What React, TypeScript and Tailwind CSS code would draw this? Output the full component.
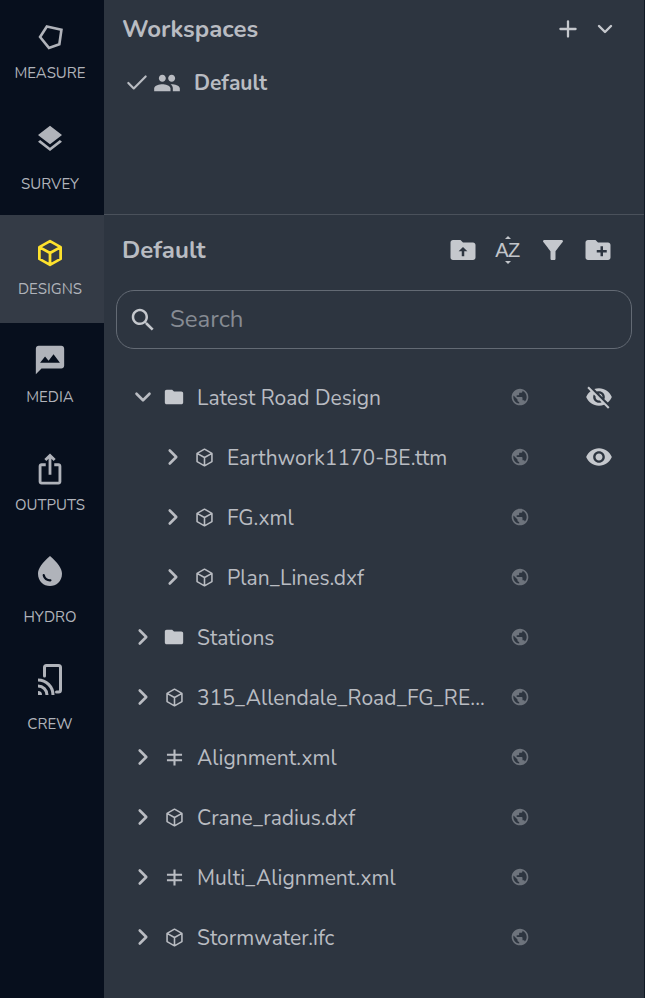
import * as React from "react"
import { ChevronDown, ChevronRight, Plus, Check } from "lucide-react"

const font = "font-['Nunito','Lato','Noto_Sans',sans-serif]"

// material icon paths
const paths = {
  layers: "M11.99 18.54l-7.37-5.73L3 14.07l9 7 9-7-1.63-1.27-7.38 5.74zM12 16l7.36-5.73L21 9l-9-7-9 7 1.63 1.27L12 16z",
  mms: "M20 2H4c-1.1 0-1.99.9-1.99 2L2 22l4-4h14c1.1 0 2-.9 2-2V4c0-1.1-.9-2-2-2zM5 14l3.5-4.5 2.5 3.01L14.5 8l4.5 6H5z",
  share: "M16 5l-1.42 1.42-1.59-1.59V16h-1.98V4.83L9.42 6.42 8 5l4-4 4 4zm4 5v11c0 1.1-.9 2-2 2H6c-1.11 0-2-.9-2-2V10c0-1.11.89-2 2-2h3v2H6v11h12V10h-3V8h3c1.1 0 2 .89 2 2z",
  drop: "M12 2c-5.33 4.55-8 8.48-8 11.8 0 4.98 3.8 8.2 8 8.2s8-3.22 8-8.2c0-3.32-2.67-7.25-8-11.8zM7.83 14c.37 0 .67.26.74.62.41 2.22 2.28 2.98 3.64 2.87.43-.02.79.32.79.75 0 .4-.32.73-.72.75-2.13.13-4.62-1.09-5.19-4.12-.08-.45.28-.87.74-.87z",
  people: "M16 11c1.66 0 2.99-1.34 2.99-3S17.66 5 16 5c-1.66 0-3 1.34-3 3s1.34 3 3 3zm-8 0c1.66 0 2.99-1.34 2.99-3S9.66 5 8 5C6.34 5 5 6.34 5 8s1.34 3 3 3zm0 2c-2.33 0-7 1.17-7 3.5V19h14v-2.5c0-2.33-4.67-3.5-7-3.5zm8 0c-.29 0-.62.02-.97.05 1.16.84 1.97 1.97 1.97 3.45V19h6v-2.5c0-2.33-4.67-3.5-7-3.5z",
  folder: "M10 4H4c-1.1 0-1.99.9-1.99 2L2 18c0 1.1.9 2 2 2h16c1.1 0 2-.9 2-2V8c0-1.1-.9-2-2-2h-8l-2-2z",
  newFolder: "M20 6h-8l-2-2H4c-1.11 0-1.99.89-1.99 2L2 18c0 1.11.89 2 2 2h16c1.11 0 2-.89 2-2V8c0-1.11-.89-2-2-2zm-1 8h-3v3h-2v-3h-3v-2h3V9h2v3h3v2z",
  uploadFolder: "M20 6h-8l-2-2H4c-1.1 0-1.99.9-1.99 2L2 18c0 1.1.9 2 2 2h16c1.1 0 2-.9 2-2V8c0-1.1-.9-2-2-2zm-7 7v4h-2v-4H8.5L12 9.5l3.5 3.5H13z",
  filter: "M4.25 5.61C6.27 8.2 10 13 10 13v6c0 .55.45 1 1 1h2c.55 0 1-.45 1-1v-6s3.72-4.8 5.74-7.39c.51-.66.04-1.61-.79-1.61H5.04c-.83 0-1.3.95-.79 1.61z",
  globe: "M12 2C6.48 2 2 6.48 2 12s4.48 10 10 10 10-4.48 10-10S17.52 2 12 2zm-1 17.93c-3.95-.49-7-3.85-7-7.93 0-.62.08-1.21.21-1.79L9 15v1c0 1.1.9 2 2 2v1.93zm6.9-2.54c-.26-.81-1-1.39-1.9-1.39h-1v-3c0-.55-.45-1-1-1H8v-2h2c.55 0 1-.45 1-1V7h2c1.1 0 2-.9 2-2v-.41c2.93 1.19 5 4.06 5 7.41 0 2.08-.8 3.97-2.1 5.39z",
  eye: "M12 4.5C7 4.5 2.73 7.61 1 12c1.73 4.39 6 7.5 11 7.5s9.27-3.11 11-7.5c-1.73-4.39-6-7.5-11-7.5zM12 17c-2.76 0-5-2.24-5-5s2.24-5 5-5 5 2.24 5 5-2.24 5-5 5zm0-8c-1.66 0-3 1.34-3 3s1.34 3 3 3 3-1.34 3-3-1.34-3-3-3z",
  eyeOff: "M12 7c2.76 0 5 2.24 5 5 0 .65-.13 1.26-.36 1.83l2.92 2.92c1.51-1.26 2.7-2.89 3.43-4.75-1.73-4.39-6-7.5-11-7.5-1.4 0-2.74.25-3.98.7l2.16 2.16C10.74 7.13 11.35 7 12 7zM2 4.27l2.28 2.28.46.46C3.08 8.3 1.78 10.02 1 12c1.73 4.39 6 7.5 11 7.5 1.55 0 3.03-.3 4.38-.84l.42.42L19.73 22 21 20.73 3.27 3 2 4.27zM7.53 9.8l1.55 1.55c-.05.21-.08.43-.08.65 0 1.66 1.34 3 3 3 .22 0 .44-.03.65-.08l1.55 1.55c-.67.33-1.41.53-2.2.53-2.76 0-5-2.24-5-5 0-.79.2-1.53.53-2.2zm4.31-.78l3.15 3.15.02-.16c0-1.66-1.34-3-3-3l-.17.01z",
  search: "M15.5 14h-.79l-.28-.27C15.41 12.59 16 11.11 16 9.5 16 5.91 13.09 3 9.5 3S3 5.91 3 9.5 5.91 16 9.5 16c1.61 0 3.09-.59 4.23-1.57l.27.28v.79l5 4.99L20.49 19l-4.99-5zm-6 0C7.01 14 5 11.99 5 9.5S7.01 5 9.5 5 14 7.01 14 9.5 11.99 14 9.5 14z",
}

function Mi({ d, className }: { d: string; className?: string }) {
  return (
    <svg viewBox="0 0 24 24" fill="currentColor" className={className}>
      <path d={d} />
    </svg>
  )
}

function Cube({ className, width = 2 }: { className?: string; width?: number }) {
  return (
    <svg viewBox="0 0 24 24" fill="none" stroke="currentColor" strokeWidth={width} strokeLinejoin="round" className={className}>
      <path d="M12 2.5l8.5 4.8v9.4L12 21.500l-8.500-4.800V7.300zM3.500 7.300L12 12l8.500-4.700M12 12v9.500" />
    </svg>
  )
}

function Pentagon({ className }: { className?: string }) {
  return (
    <svg viewBox="0 0 24 24" fill="none" stroke="currentColor" strokeWidth="2.5" className={className}>
      <path d="M8.500 1.500L22.500 4.500 20.500 18.500 10.500 22 2 11.500z" />
    </svg>
  )
}

function Crew({ className }: { className?: string }) {
  return (
    <svg viewBox="0 0 24 31" fill="none" stroke="currentColor" strokeWidth="3" strokeLinecap="round" className={className}>
      <path d="M6.500 12V3.500Q6.500 1.500 8.500 1.500H20.500Q22.500 1.500 22.500 3.500V26Q22.500 28 20.500 28H18.500" />
      <path d="M0 22A9 9 0 0 1 9 31M0 16A15 15 0 0 1 15 31" strokeLinecap="butt" />
      <path d="M0 27A4 4 0 0 1 4 31H0z" fill="currentColor" stroke="none" />
    </svg>
  )
}

function AlignIcon({ className }: { className?: string }) {
  return (
    <svg viewBox="0 0 18 18" fill="none" stroke="currentColor" strokeWidth="2.2" className={className}>
      <path d="M1 6h16M1 12h16M9 .5v17" />
    </svg>
  )
}

function SortAz() {
  return (
    <div className="relative flex h-[26px] w-[26px] items-center justify-center text-[#c2c5ca]">
      <span className="font-['Liberation_Sans',sans-serif] text-[20px] leading-none tracking-[-0.5px]">AZ</span>
      <span className="absolute top-[-1px] left-[10px] h-0 w-0 border-x-[3px] border-b-[3px] border-x-transparent border-b-[#c2c5ca]" />
      <span className="absolute bottom-[-1px] left-[10px] h-0 w-0 border-x-[3px] border-t-[3px] border-x-transparent border-t-[#c2c5ca]" />
    </div>
  )
}

function NavItem({ label, icon, height, iconBox, active }: { label: string; icon: React.ReactNode; height: string; iconBox: string; active?: boolean }) {
  return (
    <div className={`flex w-full flex-col items-center pr-[4px] text-[#b0b3ba] ${height} ${active ? "bg-[#343b46]" : ""}`}>
      <div className={`flex items-center justify-center ${iconBox}`}>{icon}</div>
      <span className="mt-[1px] text-[15px] leading-[20px]">{label}</span>
    </div>
  )
}

type Row = { name: string; kind: "folder" | "cube" | "align"; depth?: boolean; open?: boolean; eye?: "on" | "off" }

const rows: Row[] = [
  { name: "Latest Road Design", kind: "folder", open: true, eye: "off" },
  { name: "Earthwork1170-BE.ttm", kind: "cube", depth: true, eye: "on" },
  { name: "FG.xml", kind: "cube", depth: true },
  { name: "Plan_Lines.dxf", kind: "cube", depth: true },
  { name: "Stations", kind: "folder" },
  { name: "315_Allendale_Road_FG_RE...", kind: "cube" },
  { name: "Alignment.xml", kind: "align" },
  { name: "Crane_radius.dxf", kind: "cube" },
  { name: "Multi_Alignment.xml", kind: "align" },
  { name: "Stormwater.ifc", kind: "cube" },
]

function TreeRow({ row }: { row: Row }) {
  return (
    <div className={`flex h-[60px] items-center text-[#b9bcc2] ${row.depth ? "pl-[60px]" : "pl-[30px]"}`}>
      <div className="flex w-[18px] justify-center">
        {row.open ? (
          <ChevronDown className="h-[26px] w-[26px] shrink-0" strokeWidth={2.4} />
        ) : (
          <ChevronRight className="h-[26px] w-[26px] shrink-0" strokeWidth={2.4} />
        )}
      </div>
      <div className="ml-[13px] flex w-[18px] justify-center">
        {row.kind === "folder" && <Mi d={paths.folder} className="h-[22px] w-[22px] shrink-0 text-[#c5c8cd]" />}
        {row.kind === "cube" && <Cube width={1.8} className="h-[21px] w-[21px] shrink-0" />}
        {row.kind === "align" && <AlignIcon className="h-[17px] w-[17px] shrink-0" />}
      </div>
      <span className={`ml-[14px] translate-y-[1px] truncate text-[21px] leading-[28px] ${row.depth ? "w-[270px]" : "w-[300px]"}`}>{row.name}</span>
      <div className="ml-auto flex items-center">
        <Mi d={paths.globe} className="h-[20px] w-[20px] text-[#6d737c]" />
        <div className="ml-[55px] mr-[31px] flex h-[28px] w-[28px] items-center justify-center">
          {row.eye === "on" && <Mi d={paths.eye} className="h-[28px] w-[28px] text-[#c5c8cd]" />}
          {row.eye === "off" && <Mi d={paths.eyeOff} className="h-[28px] w-[28px] text-[#c5c8cd]" />}
        </div>
      </div>
    </div>
  )
}

export default function App() {
  return (
    <div className={`flex h-[998px] w-[645px] overflow-hidden bg-[#2d3540] ${font}`}>
      {/* Left nav */}
      <div className="flex w-[104px] shrink-0 flex-col bg-[#070f1d]">
        <NavItem label="MEASURE" height="h-[107px]" iconBox="h-[62px] pt-[13px]" icon={<Pentagon className="h-[25px] w-[25px]" />} />
        <NavItem label="SURVEY" height="h-[108px]" iconBox="h-[66px] pb-[2px]" icon={<Mi d={paths.layers} className="h-[32px] w-[32px]" />} />
        <NavItem label="DESIGNS" active height="h-[108px]" iconBox="h-[63px] pt-[12px]" icon={<Cube width={2.2} className="h-[30px] w-[30px] text-[#fde12d]" />} />
        <NavItem label="MEDIA" height="h-[108px]" iconBox="h-[63px] pt-[11px]" icon={<Mi d={paths.mms} className="h-[34px] w-[34px]" />} />
        <NavItem label="OUTPUTS" height="h-[108px]" iconBox="h-[63px] pt-[13px]" icon={<Mi d={paths.share} className="h-[34px] w-[34px]" />} />
        <NavItem label="HYDRO" height="h-[108px]" iconBox="h-[67px] pb-[3px]" icon={<Mi d={paths.drop} className="h-[36px] w-[36px]" />} />
        <NavItem label="CREW" height="h-[100px]" iconBox="h-[66px] pb-[1px]" icon={<Crew className="h-[31px] w-[24px]" />} />
      </div>

      {/* Main panel */}
      <div className="flex min-w-0 flex-1 flex-col border-r border-[#111a26] text-[#b9bcc2]">
        <div className="h-[215px] shrink-0 border-b border-[#4a515b]">
          <div className="flex h-[57px] items-center pr-[27px] pl-[18px]">
            <span className="text-[24px] font-bold leading-[32px]">Workspaces</span>
            <Plus className="ml-auto h-[26px] w-[26px] text-[#c5c8cd]" strokeWidth={2.1} />
            <ChevronDown className="ml-[12px] h-[24px] w-[24px] text-[#c5c8cd]" strokeWidth={2.4} />
          </div>
          <div className="flex h-[52px] items-center pl-[20px]">
            <Check className="h-[26px] w-[26px]" strokeWidth={2} />
            <Mi d={paths.people} className="ml-[3px] h-[28px] w-[28px]" />
            <span className="ml-[13px] text-[21px] font-bold leading-[28px]">Default</span>
          </div>
        </div>

        <div className="flex h-[75px] pt-[19px] pr-[24px] pl-[18px]">
          <span className="text-[24px] font-bold leading-[32px]">Default</span>
          <div className="ml-auto flex h-[32px] items-center text-[#c5c8cd]">
            <div className="flex w-[45px] justify-center"><Mi d={paths.uploadFolder} className="h-[30px] w-[30px]" /></div>
            <div className="flex w-[45px] justify-center"><SortAz /></div>
            <div className="flex w-[45px] justify-center"><Mi d={paths.filter} className="h-[30px] w-[30px]" /></div>
            <div className="flex w-[45px] justify-center"><Mi d={paths.newFolder} className="h-[30px] w-[30px]" /></div>
          </div>
        </div>

        <div className="mx-[12px] flex h-[59px] w-[516px] items-center rounded-[18px] border border-[#636a74] pl-[11px]">
          <Mi d={paths.search} className="h-[30px] w-[30px] text-[#c5c8cd]" />
          <span className="ml-[12px] -translate-y-[1px] text-[24px] leading-[32px] text-[#868b93]">Search</span>
        </div>

        <div className="mt-[18px]">
          {rows.map((row) => (
            <TreeRow key={row.name} row={row} />
          ))}
        </div>
      </div>
    </div>
  )
}
